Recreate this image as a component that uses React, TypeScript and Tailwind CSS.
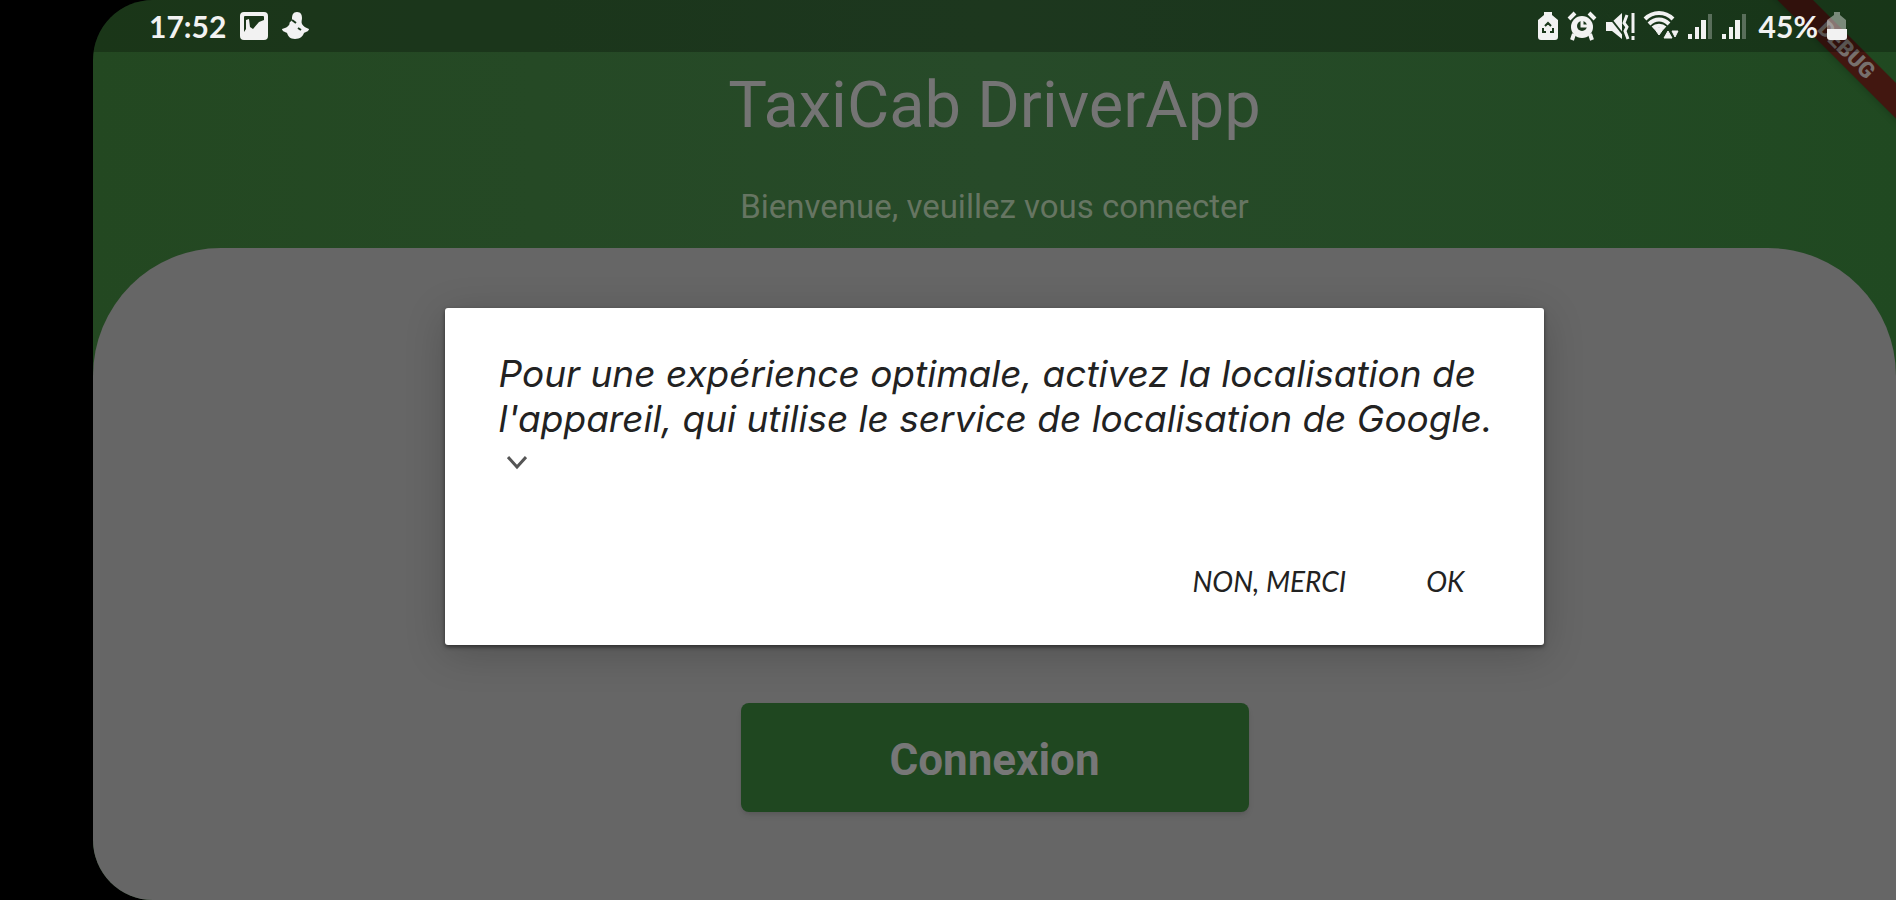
import { useState } from "react";

function ImageIcon() {
  return (
    <svg viewBox="0 0 30 30" className="size-[30px]" fill="currentColor">
      <path
        fillRule="evenodd"
        d="M5 1h20a4 4 0 0 1 4 4v20a4 4 0 0 1-4 4H5a4 4 0 0 1-4-4V5a4 4 0 0 1 4-4Zm0 5v15l2-3V9l3-1 1 8 3 2 6-7 5-2V6a1 1 0 0 0-1-1H6a1 1 0 0 0-1 1Z"
      />
    </svg>
  );
}

function SnapIcon() {
  return (
    <svg viewBox="0 0 28 30" className="h-[30px] w-[28px]" fill="currentColor">
      <path d="M15 1c4 0 5 3 5 6 0 2-1 4 0 6s4 4 7 5c0 2-3 3-5 4-1 3-4 6-9 6s-7-3-8-6c-2-1-5-2-5-4 3-1 6-2 7-4 1-1 0-2 1-3 1-1 2-1 2-3 0-4 1-7 5-7Z" />
      <path d="M10 9l4 3M16 17l3 2" stroke="#1b381c" strokeWidth="2" />
    </svg>
  );
}

function BatterySaverIcon() {
  return (
    <svg viewBox="0 0 22 30" className="h-[30px] w-[22px]">
      <path d="M7 1h8v3l6 5v17a3 3 0 0 1-3 3H4a3 3 0 0 1-3-3V9l6-5Z" fill="currentColor" />
      <path d="M8 15l3-3 3 3M6 17v4h3M16 17v4h-3" fill="none" stroke="#1b381c" strokeWidth="2" />
    </svg>
  );
}

function AlarmIcon() {
  return (
    <svg viewBox="0 0 30 30" className="size-[30px]">
      <path d="M2 8l6-6M28 8l-6-6M7 23l-2 6M23 23l2 6" stroke="currentColor" strokeWidth="4" />
      <circle cx="15" cy="16" r="11" fill="currentColor" />
      <circle cx="15" cy="15" r="5" fill="#1b381c" />
      <path d="M15 10v5h5" fill="none" stroke="currentColor" strokeWidth="3" />
    </svg>
  );
}

function MutedIcon() {
  return (
    <svg viewBox="0 0 30 30" className="size-[30px]">
      <path d="M1 11h6l10-9v26l-10-8H1Z" fill="currentColor" />
      <path d="M2 3l19 24" stroke="#1b381c" strokeWidth="2" />
      <path d="M22 4l-3 8 3 4-2 4 3 8M28 2v20M28 25v4" fill="none" stroke="currentColor" strokeWidth="3" />
    </svg>
  );
}

function WifiIcon() {
  return (
    <svg viewBox="0 0 36 30" className="h-[30px] w-[36px]" fill="none" stroke="currentColor">
      <path d="M2 8c8-8 20-8 28 0M6 13c6-6 14-6 20 0M10 17c3-3 9-3 12 0" strokeWidth="4" />
      <path d="M11 17h10l-5 7Z" fill="currentColor" strokeWidth="1" />
      <path d="M21 27l4-7 4 7ZM29 20h6l-3 6Z" fill="currentColor" strokeWidth="1" />
    </svg>
  );
}

function SignalIcon() {
  return (
    <svg viewBox="0 0 26 30" className="h-[30px] w-[26px]" fill="currentColor">
      <rect x="1" y="23" width="4" height="5" />
      <rect x="8" y="16" width="4" height="12" />
      <rect x="14" y="9" width="5" height="19" />
      <rect x="21" y="3" width="4" height="25" opacity="0.3" />
    </svg>
  );
}

function BatteryIcon() {
  return (
    <svg viewBox="0 0 22 30" className="h-[30px] w-[22px]" fill="currentColor">
      <path d="M8 1h6v3l6 5v9H1V9l7-5Z" opacity="0.45" />
      <path d="M1 18h20v8a3 3 0 0 1-3 3H4a3 3 0 0 1-3-3Z" />
    </svg>
  );
}

function StatusBar() {
  return (
    <div className="absolute inset-x-0 top-0 z-10 flex h-[52px] items-center justify-between bg-black/25 pr-12 pl-14 font-['Lato',sans-serif] text-[30px] leading-none font-bold text-[#f2f2f2]">
      <div className="flex items-center gap-[13px]">
        <span>17:52</span>
        <ImageIcon />
        <SnapIcon />
      </div>
      <div className="flex items-center gap-2">
        <BatterySaverIcon />
        <AlarmIcon />
        <MutedIcon />
        <WifiIcon />
        <SignalIcon />
        <SignalIcon />
        <div className="ml-1 flex items-center gap-2">
          <span>45%</span>
          <BatteryIcon />
        </div>
      </div>
    </div>
  );
}

export default function App() {
  const [open, setOpen] = useState(true);

  return (
    <div className="flex min-h-screen bg-black pl-[93px] font-['Roboto',sans-serif]">
      <div className="relative flex flex-1 flex-col overflow-hidden rounded-l-[60px] bg-linear-to-r from-[#234821] via-[#274a29] to-[#204921]">
        {/* Debug ribbon */}
        <div className="absolute -top-[62px] -right-[54px] flex h-[216px] w-[216px] rotate-45 items-center">
          <div className="flex h-[25px] w-full items-center justify-center bg-[#421710] pl-3 text-[22px] leading-none font-black text-[#77706d] shadow-md">
            DEBUG
          </div>
        </div>

        <StatusBar />

        <header className="flex h-[248px] flex-col items-center pt-[62px] text-[#747474]">
          <h1 className="text-[65px] leading-[86px]">TaxiCab DriverApp</h1>
          <p className="mt-[39px] text-[33px] leading-[40px] text-[#667562]">
            Bienvenue, veuillez vous connecter
          </p>
        </header>

        <main className="flex flex-1 flex-col items-center justify-end rounded-t-[128px] bg-[#666] pb-[88px]">
          <button
            type="button"
            className="h-[109px] w-[508px] rounded-lg bg-[#1f4720] pt-1 text-[44px] font-bold text-[#777] shadow-md"
          >
            Connexion
          </button>
        </main>

        {/* Location permission */}
        {open && (
          <div className="absolute inset-0 flex items-center justify-center pt-[52px]">
            <div
              role="dialog"
              aria-modal="true"
              className="w-[61%] rounded-[3px] bg-white pt-[43px] pr-10 pb-[30px] pl-[54px] font-['Lato',sans-serif] text-[#222] italic shadow-[0_2px_4px_rgba(0,0,0,0.5),0_8px_40px_rgba(0,0,0,0.2)]"
            >
              <p className="font-['Inter',sans-serif] text-[37px] leading-[45px]">
                Pour une expérience optimale, activez la localisation de
                <br />
                l'appareil, qui utilise le service de localisation de Google.
              </p>
              <button type="button" aria-label="Plus" className="flex h-[45px] items-center pl-2">
                <svg viewBox="0 0 20 14" className="h-[14px] w-[20px]" fill="none" stroke="#555" strokeWidth="3">
                  <path d="M1 1l9 10 9-10" />
                </svg>
              </button>
              <div className="mt-[61px] flex justify-end gap-20 pr-10 text-[28px] leading-[68px]">
                <button type="button" onClick={() => setOpen(false)}>
                  NON, MERCI
                </button>
                <button type="button" onClick={() => setOpen(false)}>
                  OK
                </button>
              </div>
            </div>
          </div>
        )}
      </div>
    </div>
  );
}
